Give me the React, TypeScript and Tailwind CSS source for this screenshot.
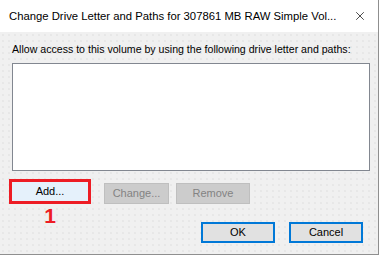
import { X } from "lucide-react";

const ui = { fontFamily: '"Liberation Sans", Arial, sans-serif' };

export default function App() {
  return (
    <div className="h-[256px] w-[380px] bg-white">
      <div className="flex h-[255px] w-[379px] flex-col border-r border-b border-[#8f8f8f]">
        {/* title bar */}
        <div className="flex h-[32px] shrink-0 items-center bg-white pl-[9px] pr-[5px]">
          <span className="min-w-0 flex-1 whitespace-nowrap text-[11.3px] text-black" style={ui}>
            Change Drive Letter and Paths for 307861 MB RAW Simple Vol...
          </span>
          <X size={14} strokeWidth={1.2} className="mr-[6px] shrink-0 text-black" />
        </div>

        {/* body */}
        <div
          className="flex-1 bg-[#f0f0f0] bg-[radial-gradient(#dcdcdc_0.6px,transparent_0.8px)] bg-size-[6px_6px]"
          style={ui}
        >
          <p className="mt-[11px] pl-[12px] text-[10.6px] leading-[13px] text-black">
            Allow access to this volume by using the following drive letter and paths:
          </p>
          <div className="mt-[7px] ml-[12px] h-[108px] w-[358px] border border-[#828790] bg-white" />

          <div className="mt-[8px] flex items-start">
            <div className="ml-[9px] flex h-[25px] w-[82px] items-center justify-center border-[3px] border-[#ed1c24] bg-[#e5f1fb] text-[11px] text-black">
              Add...
            </div>
            <div className="mt-[4px] ml-[13px] flex h-[21px] w-[65px] items-center justify-center border border-[#bfbfbf] bg-[#cccccc] text-[11px] text-[#838383]">
              Change...
            </div>
            <div className="mt-[4px] ml-[7px] flex h-[21px] w-[74px] items-center justify-center border border-[#bfbfbf] bg-[#cccccc] text-[11px] text-[#838383]">
              Remove
            </div>
          </div>

          <div className="flex items-start">
            <div className="ml-[9px] mt-[2px] w-[82px] text-center text-[21px] font-bold leading-[20px] text-[#ed1c24]">
              1
            </div>
            <div className="ml-auto mt-[18px] mr-[15px] flex gap-[14px]">
              <div className="flex h-[21px] w-[74px] items-center justify-center border-2 border-[#0078d7] bg-[#e1e1e1] text-[11px] text-black">
                OK
              </div>
              <div className="flex h-[21px] w-[74px] items-center justify-center border-2 border-[#0078d7] bg-[#e1e1e1] text-[11px] text-black">
                Cancel
              </div>
            </div>
          </div>
        </div>
      </div>
    </div>
  );
}
